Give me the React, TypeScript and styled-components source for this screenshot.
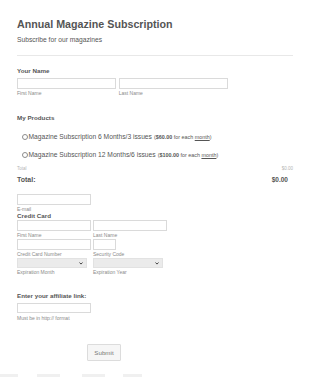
import styled, { createGlobalStyle } from "styled-components";

const GlobalStyle = createGlobalStyle`
  html, body {
    margin: 0;
    padding: 0;
    background: #fff;
  }
  body {
    font-family: "Liberation Sans", Arial, sans-serif;
    color: #555;
  }
`;

const Page = styled.div`
  width: 310px;
  box-sizing: border-box;
  padding: 17.5px 17px 0 17px;
`;

const Title = styled.h1`
  margin: 0;
  font-size: 10.7px;
  line-height: 12px;
  font-weight: 700;
  color: #555;
`;

const Subtitle = styled.p`
  margin: 6.7px 0 0;
  font-size: 6.7px;
  line-height: 8px;
  color: #555;
`;

const Divider = styled.hr`
  margin: 10.8px 0 0;
  border: 0;
  height: 1px;
  background: #e8e8e8;
`;

const Label = styled.div<{ top: number }>`
  margin-top: ${(p) => p.top}px;
  font-size: 6.24px;
  line-height: 8px;
  font-weight: 700;
  color: #555;
`;

const Row = styled.div<{ top: number; gap?: number }>`
  display: flex;
  gap: ${(p) => p.gap ?? 2}px;
  margin-top: ${(p) => p.top}px;
`;

const Field = styled.div`
  display: flex;
  flex-direction: column;
`;

const Input = styled.div<{ w: number; h?: number }>`
  width: ${(p) => p.w}px;
  height: ${(p) => p.h ?? 11}px;
  box-sizing: border-box;
  border: 1px solid #dadada;
  background: #fff;
`;

const Select = styled.div<{ w: number }>`
  width: ${(p) => p.w}px;
  height: 10px;
  box-sizing: border-box;
  background: #ebebeb;
  border: 1px solid #e2e2e2;
  display: flex;
  align-items: center;
  justify-content: flex-end;
  padding-right: 3px;
`;

const Sub = styled.div<{ top?: number }>`
  margin-top: ${(p) => p.top ?? 0.9}px;
  font-size: 5px;
  line-height: 6px;
  color: #8a8a8a;
  white-space: nowrap;
`;

const Option = styled.label<{ top: number }>`
  display: flex;
  align-items: center;
  margin-top: ${(p) => p.top}px;
  padding-left: 5px;
  font-size: 6.7px;
  line-height: 8px;
  color: #555;
  white-space: nowrap;
`;

const Radio = styled.span`
  width: 6px;
  height: 6px;
  box-sizing: border-box;
  border: 0.8px solid #8c8c8c;
  border-radius: 50%;
  margin-right: 0.5px;
  background: #fff;
`;

const Price = styled.span`
  font-size: 5.4px;
  margin-left: 2px;
  color: #555;
  b {
    font-weight: 700;
  }
  u {
    text-decoration: underline;
  }
`;

const TinyTotals = styled.div`
  display: flex;
  justify-content: space-between;
  margin-top: 7.4px;
  font-size: 4.5px;
  line-height: 5px;
  color: #b5b5b5;
`;

const TotalRow = styled.div`
  display: flex;
  justify-content: space-between;
  align-items: baseline;
  margin-top: 4.8px;
  padding-right: 5px;
  line-height: 8px;
  font-weight: 700;
  color: #555;
`;

const TotalLabel = styled.span`
  font-size: 7px;
`;

const TotalValue = styled.span`
  font-size: 6.5px;
`;

const SectionTitle = styled.div`
  margin-top: 0;
  font-size: 6.24px;
  line-height: 8px;
  font-weight: 700;
  color: #555;
`;

const Button = styled.button`
  margin: 23.4px 0 0 70px;
  width: 34px;
  height: 16.4px;
  padding: 0;
  box-sizing: border-box;
  border: 1px solid #dcdcdc;
  border-radius: 1px;
  background: #f6f6f6;
  font-family: "Liberation Sans", Arial, sans-serif;
  font-size: 6.2px;
  color: #777;
  display: block;
`;

const Footer = styled.div`
  display: flex;
  margin: 13.3px 0 0 -17px;
  height: 3px;
`;

const FooterBit = styled.span<{ w: number; ml: number }>`
  width: ${(p) => p.w}px;
  margin-left: ${(p) => p.ml}px;
  background: #f0f0f0;
`;

const Chevron = () => (
  <svg width="4" height="3" viewBox="0 0 8 6">
    <path d="M1 1l3 3.2L7 1" fill="none" stroke="#333" strokeWidth="1.8" />
  </svg>
);

function App() {
  return (
    <Page>
      <GlobalStyle />
      <Title>Annual Magazine Subscription</Title>
      <Subtitle>Subscribe for our magazines</Subtitle>
      <Divider />

      <Label top={11.3}>Your Name</Label>
      <Row top={2.7} gap={2.7}>
        <Field>
          <Input w={99} />
          <Sub top={1.3}>First Name</Sub>
        </Field>
        <Field>
          <Input w={109.3} />
          <Sub top={1.3}>Last Name</Sub>
        </Field>
      </Row>

      <Label top={18}>My Products</Label>
      <Option top={10.7}>
        <Radio />
        Magazine Subscription 6 Months/3 issues
        <Price>
          (<b>$60.00</b> for each <u>month</u>)
        </Price>
      </Option>
      <Option top={10}>
        <Radio />
        Magazine Subscription 12 Months/6 issues
        <Price>
          (<b>$100.00</b> for each <u>month</u>)
        </Price>
      </Option>

      <TinyTotals>
        <span>Total</span>
        <span>$0.00</span>
      </TinyTotals>
      <TotalRow>
        <TotalLabel>Total:</TotalLabel>
        <TotalValue>$0.00</TotalValue>
      </TotalRow>

      <Field style={{ marginTop: 9.8 }}>
        <Input w={74} />
        <Sub top={0.6}>E-mail</Sub>
      </Field>
      <SectionTitle>Credit Card</SectionTitle>
      <Row top={0.4}>
        <Field>
          <Input w={74} h={10.7} />
          <Sub>First Name</Sub>
        </Field>
        <Field>
          <Input w={74} h={10.7} />
          <Sub>Last Name</Sub>
        </Field>
      </Row>
      <Row top={1.7}>
        <Field>
          <Input w={74} h={10.7} />
          <Sub>Credit Card Number</Sub>
        </Field>
        <Field>
          <Input w={23} h={10.7} />
          <Sub>Security Code</Sub>
        </Field>
      </Row>
      <Row top={1.4} gap={6}>
        <Field>
          <Select w={70}>
            <Chevron />
          </Select>
          <Sub>Expiration Month</Sub>
        </Field>
        <Field>
          <Select w={70}>
            <Chevron />
          </Select>
          <Sub>Expiration Year</Sub>
        </Field>
      </Row>

      <Label top={17.4}>Enter your affiliate link:</Label>
      <Field style={{ marginTop: 3 }}>
        <Input w={74} h={10} />
        <Sub top={1.6}>Must be in http:// format</Sub>
      </Field>

      <Button type="button">Submit</Button>

      <Footer>
        <FooterBit w={18} ml={0} />
        <FooterBit w={23} ml={19} />
        <FooterBit w={23} ml={22} />
        <FooterBit w={19} ml={18} />
      </Footer>
    </Page>
  );
}

export default App;
